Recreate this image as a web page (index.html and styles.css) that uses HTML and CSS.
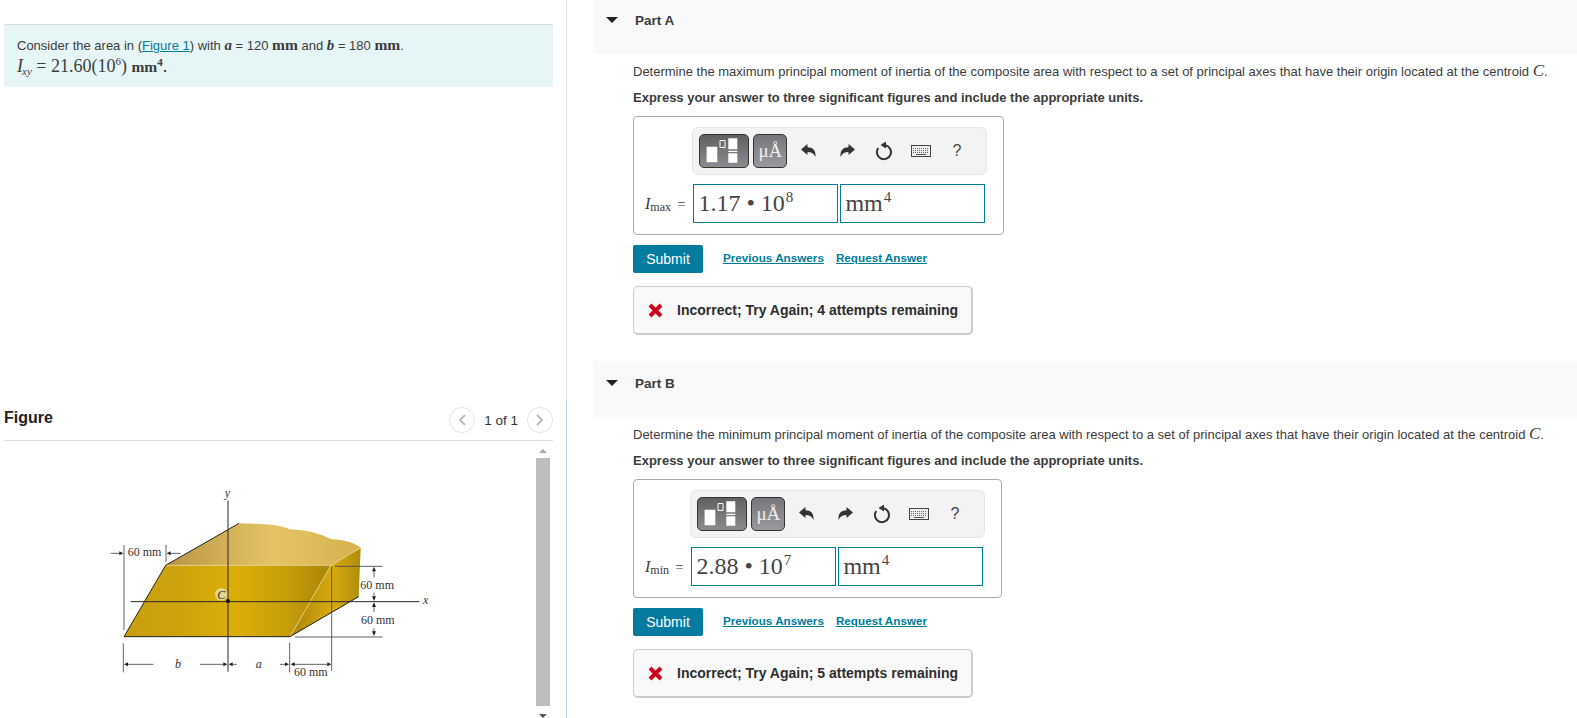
FILE: index.html
```html
<!DOCTYPE html>
<html lang="en">
<head>
<meta charset="utf-8">
<title>Principal moments of inertia</title>
<link rel="stylesheet" href="styles.css">
</head>
<body>
<div class="page">
  <aside class="left">
    <div class="intro">
      <div>Consider the area in (<a class="link" href="#">Figure 1</a>) with <b class="mv">a</b> = 120 <span class="mu">mm</span> and <b class="mv">b</b> = 180 <span class="mu">mm</span>.</div>
      <div class="formula"><i>I<sub>xy</sub></i> = 21.60(10<sup>6</sup>) <span class="mu">mm<sup>4</sup></span>.</div>
    </div>
    <div class="fig-head">
      <span class="fig-title">Figure</span>
      <div class="pager">
        <span class="circle"><svg width="8" height="12" viewBox="0 0 8 12"><path d="M7 1 2 6l5 5" fill="none" stroke="#bbb" stroke-width="2"/></svg></span>
        <span class="count">1 of 1</span>
        <span class="circle"><svg width="8" height="12" viewBox="0 0 8 12"><path d="M1 1l5 5-5 5" fill="none" stroke="#bbb" stroke-width="2"/></svg></span>
      </div>
    </div>
    <div class="fig-body">
      <div class="fig-canvas">
        <svg class="figure" width="330" height="210" viewBox="0 0 990 630">
          <defs>
            <linearGradient id="front" x1="0" x2="1" y1="0" y2="0">
              <stop offset="0" stop-color="#c79d10"/><stop offset=".28" stop-color="#cda40c"/><stop offset=".55" stop-color="#dcae08"/><stop offset=".8" stop-color="#c49c0a"/><stop offset="1" stop-color="#a98408"/>
            </linearGradient>
            <linearGradient id="top" x1="0" x2="1" y1="0" y2="0">
              <stop offset="0" stop-color="#b99545"/><stop offset=".55" stop-color="#e5c466"/><stop offset="1" stop-color="#d5b14f"/>
            </linearGradient>
            <linearGradient id="side" x1="0" x2="1" y1="0" y2="0">
              <stop offset="0" stop-color="#a98408"/><stop offset=".6" stop-color="#d8aa10"/><stop offset="1" stop-color="#b08c0a"/>
            </linearGradient>
          </defs>
          <path d="M197 256 417 130C470 132 530 130 570 148 620 150 660 160 695 178 730 178 765 190 782 203L693 256Z" fill="url(#top)"/>
          <path d="M693 256 782 203 776 350 570 470Z" fill="url(#side)"/>
          <path d="M72 470 197 256H693L570 470Z" fill="url(#front)"/>
          <path d="M197 256H693L782 203M693 256 570 470" fill="none" stroke="#f0dfa0" stroke-width="2"/>
          <path d="M72 470 197 256 417 130M72 470H570L776 350" fill="none" stroke="#222" stroke-width="3"/>
          <circle cx="364" cy="343" r="19" fill="#e8d48a"/>
          <path d="M384 62V575M92 365H958" fill="none" stroke="#2a2a2a" stroke-width="3"/>
          <g fill="none" stroke="#444" stroke-width="2.500">
            <path d="M72 195V450M198 195V245M32 220H60M210 220H242"/>
            <path d="M705 259H848M585 471H848M822 272V292M822 338V350M822 376V396M822 445V458"/>
            <path d="M695 260V572M70 490V577M569 488V577"/>
            <path d="M82 553H160M300 553H372M396 553H410M540 553H557M582 553H684"/>
          </g>
          <path fill="#222" d="M70 220 58 214V226ZM200 220 212 214V226ZM822 260 816 274H828ZM822 363 816 349H828ZM822 367 816 381H828ZM822 468 816 454H828ZM72 553 84 547V559ZM382 553 370 547V559ZM386 553 398 547V559ZM567 553 555 547V559ZM572 553 584 547V559ZM694 553 682 547V559Z"/>
          <circle cx="384" cy="363" r="6" fill="#111"/>
          <g class="fig-text">
            <text x="83" y="229">60 mm</text>
            <text x="781" y="326">60 mm</text>
            <text x="783" y="431">60 mm</text>
            <text x="582" y="587">60 mm</text>
            <text class="fig-var" x="374" y="50">y</text>
            <text class="fig-var" x="969" y="373">x</text>
            <text class="fig-var" x="352" y="358">C</text>
            <text class="fig-var" x="225" y="565">b</text>
            <text class="fig-var" x="467" y="565">a</text>
          </g>
        </svg>
      </div>
      <div class="scrollbar">
        <span class="arrow-up"></span>
        <span class="thumb"></span>
        <span class="arrow-down"></span>
      </div>
    </div>
  </aside>

  <main class="right">
    <section class="part">
      <header class="part-head"><span class="caret"></span><span>Part A</span></header>
      <div class="part-body">
        <p class="q">Determine the maximum principal moment of inertia of the composite area with respect to a set of principal axes that have their origin located at the centroid <i class="cm">C</i>.</p>
        <p class="hint">Express your answer to three significant figures and include the appropriate units.</p>
        <div class="answer">
          <div class="toolbar">
            <span class="tbtn wide"><svg width="44" height="28" viewBox="0 0 44 28"><path fill="#fff" d="M4.600 9.700h10.700v15.600H4.600zM26.300 1.300h9v11h-9zM26.300 16.300h9v9.400h-9zM26.300 13.700h9V15h-9z"/><path fill="none" stroke="#fff" d="M18 3.500h5v7h-5z"/></svg></span>
            <span class="tbtn mu-btn">μÅ</span>
            <svg class="ti t-undo" width="16" height="14" viewBox="0 0 16 14"><path fill="#333" d="M0 5.500 6.500 0v3.300C12 3.300 15 6.500 14.500 13 13 9.500 10.500 8 6.500 8v3z"/></svg>
            <svg class="ti t-redo" width="16" height="14" viewBox="0 0 16 14"><path fill="#333" d="M15 5.500 8.500 0v3.300C3 3.300 0 6.500 .5 13 2 9.500 4.500 8 8.500 8v3z"/></svg>
            <svg class="ti t-reset" width="17" height="19" viewBox="0 0 17 19"><path fill="none" stroke="#333" stroke-width="2" d="M3.300 6.500a7 7 0 1 0 7.200-2.700"/><path fill="#333" d="M11 0v7L5.500 3.500z"/></svg>
            <svg class="ti t-kbd" width="20" height="12" viewBox="0 0 20 12"><rect x=".5" y=".5" width="19" height="11" fill="#eee" stroke="#444"/><path stroke="#666" stroke-dasharray="1 1" fill="none" d="M2 3.500h16M2 5.500h16M2 7.500h16"/><path stroke="#555" d="M5 9.500h10"/></svg>
            <span class="ti t-help">?</span>
          </div>
          <span class="var"><i>I</i><sub>max</sub> =</span>
          <div class="fields">
            <span class="field val">1.17 • 10<sup>8</sup></span>
            <span class="field unit">mm<sup>4</sup></span>
          </div>
        </div>
        <div class="actions">
          <button class="submit" type="button">Submit</button>
          <a class="link alink" href="#">Previous Answers</a>
          <a class="link alink" href="#">Request Answer</a>
        </div>
        <div class="feedback">
          <svg width="15" height="15" viewBox="0 0 15 15"><path stroke="#d0021b" stroke-width="4" d="M2 2l11 11M13 2 2 13"/></svg>
          <span>Incorrect; Try Again; 4 attempts remaining</span>
        </div>
      </div>
    </section>

    <section class="part">
      <header class="part-head"><span class="caret"></span><span>Part B</span></header>
      <div class="part-body">
        <p class="q">Determine the minimum principal moment of inertia of the composite area with respect to a set of principal axes that have their origin located at the centroid <i class="cm">C</i>.</p>
        <p class="hint">Express your answer to three significant figures and include the appropriate units.</p>
        <div class="answer">
          <div class="toolbar">
            <span class="tbtn wide"><svg width="44" height="28" viewBox="0 0 44 28"><path fill="#fff" d="M4.600 9.700h10.700v15.600H4.600zM26.300 1.300h9v11h-9zM26.300 16.300h9v9.400h-9zM26.300 13.700h9V15h-9z"/><path fill="none" stroke="#fff" d="M18 3.500h5v7h-5z"/></svg></span>
            <span class="tbtn mu-btn">μÅ</span>
            <svg class="ti t-undo" width="16" height="14" viewBox="0 0 16 14"><path fill="#333" d="M0 5.500 6.500 0v3.300C12 3.300 15 6.500 14.500 13 13 9.500 10.500 8 6.500 8v3z"/></svg>
            <svg class="ti t-redo" width="16" height="14" viewBox="0 0 16 14"><path fill="#333" d="M15 5.500 8.500 0v3.300C3 3.300 0 6.500 .5 13 2 9.500 4.500 8 8.500 8v3z"/></svg>
            <svg class="ti t-reset" width="17" height="19" viewBox="0 0 17 19"><path fill="none" stroke="#333" stroke-width="2" d="M3.300 6.500a7 7 0 1 0 7.200-2.700"/><path fill="#333" d="M11 0v7L5.500 3.500z"/></svg>
            <svg class="ti t-kbd" width="20" height="12" viewBox="0 0 20 12"><rect x=".5" y=".5" width="19" height="11" fill="#eee" stroke="#444"/><path stroke="#666" stroke-dasharray="1 1" fill="none" d="M2 3.500h16M2 5.500h16M2 7.500h16"/><path stroke="#555" d="M5 9.500h10"/></svg>
            <span class="ti t-help">?</span>
          </div>
          <span class="var"><i>I</i><sub>min</sub> =</span>
          <div class="fields">
            <span class="field val">2.88 • 10<sup>7</sup></span>
            <span class="field unit">mm<sup>4</sup></span>
          </div>
        </div>
        <div class="actions">
          <button class="submit" type="button">Submit</button>
          <a class="link alink" href="#">Previous Answers</a>
          <a class="link alink" href="#">Request Answer</a>
        </div>
        <div class="feedback">
          <svg width="15" height="15" viewBox="0 0 15 15"><path stroke="#d0021b" stroke-width="4" d="M2 2l11 11M13 2 2 13"/></svg>
          <span>Incorrect; Try Again; 5 attempts remaining</span>
        </div>
      </div>
    </section>
  </main>
</div>
</body>
</html>
```
FILE: styles.css
```css
* { box-sizing: border-box; }
html, body { margin: 0; height: 718px; overflow: hidden; background: #fff; }
body { font-family: "Liberation Sans", Arial, sans-serif; font-size: 13px; color: #3c3c3c; }
.page { display: flex; height: 718px; overflow: hidden; }
.link { color: #007c9e; text-decoration: underline; }

.left { width: 567px; flex: none; padding-top: 24px; border-right: 1px solid #ddd; border-image: linear-gradient(#ddd 400px, #b8cfe6 400px) 1; display: flex; flex-direction: column; }
.intro { margin: 0 13px 0 4px; height: 63px; padding: 10px 13px 0; background: #e6f6f7; border-top: 1px solid #ddd; font-size: 13px; line-height: 20px; }
.mv { font-family: "Liberation Serif", serif; font-style: italic; font-size: 15px; }
.mu { font-family: "Liberation Serif", serif; font-weight: bold; font-size: 15.500px; }
.formula { font-family: "Liberation Serif", serif; font-size: 18px; line-height: 20px; }
.formula sub, .formula sup { font-size: 11px; line-height: 0; }
.formula sub { vertical-align: -3px; margin-left: -1px; }
.formula .mu { font-size: 15.500px; }
.fig-head { margin: 316px 13px 0 4px; height: 38px; border-bottom: 1px solid #ddd; display: flex; align-items: flex-start; justify-content: space-between; padding-top: 4px; }
.fig-title { font-size: 16px; font-weight: bold; color: #222; line-height: 20px; margin-top: 1px; }
.pager { display: flex; align-items: center; gap: 9px; font-size: 13.500px; height: 26px; color: #333; }
.circle { width: 26px; height: 26px; border: 1px solid #e3e3e3; border-radius: 50%; display: flex; align-items: center; justify-content: center; }
.fig-body { margin-left: 4px; margin-right: 16px; flex: 1; display: flex; overflow: hidden; }
.fig-canvas { flex: 1; padding: 39px 0 0 96px; }
.figure { display: block; }
.fig-text { font-family: "Liberation Serif", serif; font-size: 36px; fill: #333; }
.fig-var { font-style: italic; }
.scrollbar { width: 14px; background: #fff; display: flex; flex-direction: column; align-items: center; padding-top: 8px; }
.arrow-up { width: 0; height: 0; border: 4px solid transparent; border-top: 0; border-bottom: 4px solid #a8a8a8; margin-bottom: 5px; }
.arrow-down { width: 0; height: 0; border: 4px solid transparent; border-bottom: 0; border-top: 4px solid #555; margin-top: 8px; }
.thumb { width: 14px; flex: 1; background: #bdbdbd; }

.right { flex: 1; min-width: 0; padding-left: 26px; margin-top: -2px; }
.part-head { height: 56px; background: #f9f9f9; display: flex; align-items: flex-start; padding: 15px 0 0 13px; font-size: 13.500px; font-weight: bold; line-height: 16px; color: #3c3c3c; }
.caret { width: 0; height: 0; border: 6px solid transparent; border-top: 6px solid #222; border-bottom: 0; margin: 4px 17px 0 0; }
.part-body { padding-left: 40px; padding-bottom: 26px; }
.q { margin: 0; padding-top: 4px; line-height: 25px; font-size: 13px; }
.cm { font-family: "Liberation Serif", serif; font-size: 17px; }
.hint { margin: 0; line-height: 28px; font-weight: bold; }
.answer { display: inline-grid; grid-template-columns: auto auto; align-items: center; column-gap: 8px; margin-top: 4px; padding: 10px 18px 11px 11px; border: 1px solid #aaa; border-radius: 4px; vertical-align: top; }
.toolbar { grid-column: 2; grid-row: 1; margin-left: -1px; margin-right: -3px; width: 295px; height: 48px; background: #f3f3f3; border: 1px solid #e6e6e6; border-radius: 6px; position: relative; display: flex; align-items: center; padding-left: 6px; gap: 4px; }
.tbtn { height: 34px; border: 1px solid #333; border-radius: 5px; color: #eee; display: flex; align-items: center; justify-content: center; }
.wide { width: 50px; background: linear-gradient(#606063, #8c8c90); }
.mu-btn { width: 34px; background: linear-gradient(#77777b, #9a9a9e); font-family: "Liberation Serif", serif; font-size: 19px; }
.ti { position: absolute; top: 50%; transform: translateY(-50%); }
.t-undo { left: 108px; }
.t-redo { left: 147px; }
.t-reset { left: 182px; }
.t-kbd { left: 218px; }
.t-help { left: 259px; font-size: 16px; color: #444; }
.var { grid-column: 1; grid-row: 2; font-family: "Liberation Serif", serif; font-size: 14px; word-spacing: 3px; white-space: nowrap; margin-top: 9px; }
.var i { font-size: 16px; }
.var sub { font-size: 12px; line-height: 0; vertical-align: -2px; }
.fields { grid-column: 2; grid-row: 2; display: flex; gap: 2px; margin-top: 9px; }
.field { width: 145px; height: 39px; border: 1px solid #007c9e; font-family: "Liberation Serif", serif; font-size: 24px; line-height: 37px; color: #444; padding-left: 4px; }
.field sup { font-size: 15px; line-height: 0; vertical-align: 9px; margin-left: 1px; }
.actions { display: flex; align-items: center; margin-top: 10px; height: 28px; }
.submit { width: 70px; height: 28px; background: #047b9f; border: 0; border-radius: 2px; color: #fff; font: 14px "Liberation Sans", Arial, sans-serif; margin-right: 20px; padding: 0; }
.alink { font-size: 11.700px; font-weight: bold; margin-right: 12px; margin-top: -3px; }
.feedback { margin-top: 13px; width: 340px; height: 49px; background: #f9f9f9; border: 1px solid #ccc; border-bottom-width: 2px; border-right-width: 2px; border-radius: 5px; display: flex; align-items: center; padding-left: 14px; gap: 14px; font-size: 14px; font-weight: bold; color: #2e2e2e; }
```
